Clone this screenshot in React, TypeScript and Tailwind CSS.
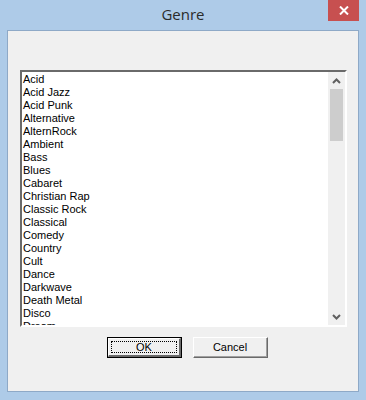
import React from "react";

const genres = [
  "Acid", "Acid Jazz", "Acid Punk", "Alternative", "AlternRock", "Ambient", "Bass", "Blues",
  "Cabaret", "Christian Rap", "Classic Rock", "Classical", "Comedy", "Country", "Cult", "Dance",
  "Darkwave", "Death Metal", "Disco", "Dream",
];

export default function App() {
  return (
    <div className="w-[366px] h-[400px] bg-[#aecbe8] relative overflow-hidden" style={{ fontFamily: '"Liberation Sans", Arial, sans-serif' }}>
      <div className="h-[30px] flex items-center justify-center text-[15px] text-[#2b2b2b] pb-[1px]" style={{ fontFamily: '"Open Sans", "Noto Sans", sans-serif' }}>
        Genre
      </div>
      <div className="absolute top-0 left-[328px] w-[31px] h-[21px] bg-[#c75050] flex items-center justify-center">
        <svg width="10" height="9" viewBox="0 0 10 9">
          <path d="M1 0.5 L9 8.5 M9 0.5 L1 8.5" stroke="white" strokeWidth="2" />
        </svg>
      </div>
      <div className="ml-[7px] w-[352px] h-[362px] border border-[#8ea9c7] bg-[#f0f0f0] pl-[12px] pt-[39px]">
        <div className="w-[327px] h-[257px] border-t-2 border-l-2 border-t-[#6a6a6a] border-l-[#6a6a6a] border-b-2 border-r-2 border-b-[#ffffff] border-r-[#ffffff] bg-white flex">
          <div className="flex-1 overflow-hidden pl-[1px] pt-[1px] text-[11px] leading-[13px] text-black">
            {genres.map((g) => (
              <div key={g} className="h-[13px] whitespace-nowrap">{g}</div>
            ))}
          </div>
          <div className="w-[17px] bg-[#f0f0f0] flex flex-col items-center">
            <div className="h-[17px] w-full flex items-center justify-center">
              <svg width="9" height="6" viewBox="0 0 9 6">
                <path d="M1 5 L4.5 1.5 L8 5" stroke="#606060" strokeWidth="2" fill="none" />
              </svg>
            </div>
            <div className="w-[13px] h-[52px] bg-[#cdcdcd]" />
            <div className="flex-1" />
            <div className="h-[17px] w-full flex items-center justify-center">
              <svg width="9" height="6" viewBox="0 0 9 6">
                <path d="M1 1 L4.5 4.5 L8 1" stroke="#606060" strokeWidth="2" fill="none" />
              </svg>
            </div>
          </div>
        </div>
        <div className="flex gap-[11px] mt-[10px] pl-[87px]">
          <div className="w-[75px] h-[21px] border border-black bg-[#f0f0f0] flex">
            <div className="flex-1 border-t border-l border-t-white border-l-white border-b-2 border-r-2 border-b-[#6a6a6a] border-r-[#6a6a6a] p-[2px] flex">
              <div className="flex-1 border border-dotted border-black flex items-center justify-center text-[11px] text-black">
                OK
              </div>
            </div>
          </div>
          <div className="w-[75px] h-[21px] bg-[#f0f0f0] border-t border-l border-t-white border-l-white border-b border-r border-b-[#6a6a6a] border-r-[#6a6a6a] flex">
            <div className="flex-1 border-b border-r border-b-[#a0a0a0] border-r-[#a0a0a0] flex items-center justify-center text-[11px] text-black">
              Cancel
            </div>
          </div>
        </div>
      </div>
    </div>
  );
}
